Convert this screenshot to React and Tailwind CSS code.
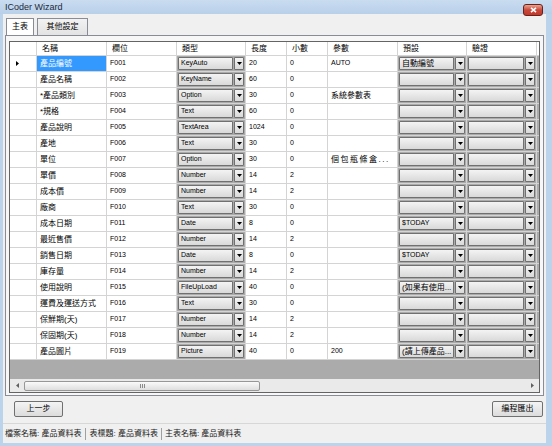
import React from 'react';

const FONT = { fontFamily: '"Liberation Sans", "Noto Sans CJK TC", sans-serif' };

const cols = [
    { key: 'name', label: '名稱', w: 'w-[70px]' },
    { key: 'field', label: '欄位', w: 'w-[70px]' },
    { key: 'type', label: '類型', w: 'w-[69px]', combo: true },
    { key: 'len', label: '長度', w: 'w-[41px]' },
    { key: 'dec', label: '小數', w: 'w-[41px]' },
    { key: 'param', label: '參數', w: 'w-[70px]' },
    { key: 'def', label: '預設', w: 'w-[69px]', combo: true },
    { key: 'valid', label: '驗證', w: 'w-[70px]', combo: true },
];

const rows = [
    ['產品編號', 'F001', 'KeyAuto', '20', '0', 'AUTO', '自動編號', ''],
    ['產品名稱', 'F002', 'KeyName', '60', '0', '', '', ''],
    ['*產品類別', 'F003', 'Option', '30', '0', '系統參數表', '', ''],
    ['*規格', 'F004', 'Text', '60', '0', '', '', ''],
    ['產品說明', 'F005', 'TextArea', '1024', '0', '', '', ''],
    ['產地', 'F006', 'Text', '30', '0', '', '', ''],
    ['單位', 'F007', 'Option', '30', '0', '個包瓶條盒...', '', ''],
    ['單價', 'F008', 'Number', '14', '2', '', '', ''],
    ['成本價', 'F009', 'Number', '14', '2', '', '', ''],
    ['廠商', 'F010', 'Text', '30', '0', '', '', ''],
    ['成本日期', 'F011', 'Date', '8', '0', '', '$TODAY', ''],
    ['最近售價', 'F012', 'Number', '14', '2', '', '', ''],
    ['銷售日期', 'F013', 'Date', '8', '0', '', '$TODAY', ''],
    ['庫存量', 'F014', 'Number', '14', '2', '', '', ''],
    ['使用說明', 'F015', 'FileUpLoad', '40', '0', '', '(如果有使用...', ''],
    ['運費及運送方式', 'F016', 'Text', '30', '0', '', '', ''],
    ['保鮮期(天)', 'F017', 'Number', '14', '2', '', '', ''],
    ['保固期(天)', 'F018', 'Number', '14', '2', '', '', ''],
    ['產品圖片', 'F019', 'Picture', '40', '0', '200', '(請上傳產品...', ''],
];

const isCjk = (s) => /[\u3400-\u9fff]/.test(s);

const Arrow = () => (
    <svg width="5" height="3" viewBox="0 0 5 3"><path d="M0 0h5L2.5 3z" fill="#000" /></svg>
);

const Combo = ({ value }) => (
    <div className="flex h-full gap-px">
        <div className="flex-1 min-w-0 flex items-center px-[2px] border border-[#707070] rounded-[1px] bg-gradient-to-b from-[#f4f4f4] to-[#d9d9d9] overflow-hidden whitespace-nowrap">
            {value}
        </div>
        <div className="w-[10px] flex items-center justify-center border border-[#707070] rounded-[1px] bg-gradient-to-b from-[#f4f4f4] to-[#d9d9d9]">
            <Arrow />
        </div>
    </div>
);

const Cell = ({ col, value, selected }) => {
    const size = isCjk(value) ? 'text-[8px]' : 'text-[7px]';
    if (col.combo) {
        return (
            <div className={`${col.w} h-full shrink-0 border-r border-[#d4d4d4] p-px ${size}`}>
                <Combo value={value} />
            </div>
        );
    }
    return (
        <div
            className={`${col.w} h-full shrink-0 border-r border-[#d4d4d4] flex items-center px-[3px] whitespace-nowrap overflow-hidden ${size} ${
                selected ? 'bg-[#3399ff] text-white' : 'bg-white text-black'
            } ${col.key === 'param' && value.startsWith('個') ? 'tracking-[1.5px]' : ''}`}
        >
            {value}
        </div>
    );
};

const Grid = () => (
    <div className="border border-[#646464] bg-[#ababab] flex flex-col">
        {/* 표 머리 */}
        <div className="flex h-[14px] bg-white border-b border-[#d4d4d4] text-[8px]">
            <div className="w-[27px] shrink-0 border-r border-[#d4d4d4]" />
            {cols.map((c) => (
                <div key={c.key} className={`${c.w} shrink-0 border-r border-[#d4d4d4] flex items-center px-[5px]`}>
                    {c.label}
                </div>
            ))}
        </div>
        {rows.map((r, i) => (
            <div key={r[1]} className="flex h-[16px] border-b border-[#d4d4d4]">
                <div className="w-[27px] shrink-0 bg-white border-r border-[#d4d4d4] flex items-center pl-[6px]">
                    {i === 0 && (
                        <svg width="3" height="5" viewBox="0 0 3 5"><path d="M0 0l3 2.5L0 5z" fill="#000" /></svg>
                    )}
                </div>
                {cols.map((c, j) => (
                    <Cell key={c.key} col={c} value={r[j]} selected={i === 0 && j === 0} />
                ))}
            </div>
        ))}
        <div className="h-[19px]" />
        {/* 가로 스크롤바 */}
        <div className="h-[13px] bg-[#eaeaea] flex items-center px-[2px] gap-[2px]">
            <div className="w-[10px] flex justify-center">
                <svg width="3" height="5" viewBox="0 0 3 5"><path d="M3 0L0 2.5 3 5z" fill="#606060" /></svg>
            </div>
            <div className="w-[236px] h-[10px] rounded-[2px] border border-[#979797] bg-gradient-to-b from-[#fafafa] to-[#dedede] flex items-center justify-center gap-px">
                <div className="w-px h-[4px] bg-[#8a8a8a]" />
                <div className="w-px h-[4px] bg-[#8a8a8a]" />
                <div className="w-px h-[4px] bg-[#8a8a8a]" />
            </div>
            <div className="flex-1" />
            <div className="w-[10px] flex justify-center">
                <svg width="3" height="5" viewBox="0 0 3 5"><path d="M0 0l3 2.5L0 5z" fill="#606060" /></svg>
            </div>
        </div>
    </div>
);

const Button = ({ children, className }) => (
    <div className={`h-[16px] flex items-center justify-center rounded-[2px] border border-[#707070] bg-gradient-to-b from-[#f4f4f4] to-[#dcdcdc] text-[8px] ${className}`}>
        {children}
    </div>
);

export default function App() {
    return (
        <div style={FONT} className="w-[552px] h-[446px] bg-[#bcd3ec] flex flex-col overflow-hidden text-black">
            {/* 타이틀 바 */}
            <div className="h-[14px] shrink-0 flex items-center justify-between pl-[5px] pr-[9px] bg-gradient-to-b from-[#c9dcf0] to-[#b9d0ea]">
                <span className="text-[9px] text-[#1b2a3c] mt-[2px]">ICoder Wizard</span>
                <div className="relative z-10 w-[20px] h-[12px] mt-[6px] rounded-[3px] border border-[#6b2018] bg-gradient-to-b from-[#e8a493] via-[#c8483a] to-[#c0392b] flex items-center justify-center">
                    <svg width="7" height="6" viewBox="0 0 7 6"><path d="M1 0.8L6 5.2M6 0.8L1 5.2" stroke="#fff" strokeWidth="1.6" /></svg>
                </div>
            </div>

            {/* 클라이언트 영역 */}
            <div className="flex-1 ml-[3px] mr-[6px] mb-[3px] bg-[#f0f0f0] flex flex-col">
                {/* 탭 */}
                <div className="h-[21px] shrink-0 flex items-end pl-[3px] gap-[3px] text-[8px]">
                    <div className="h-[17px] w-[28px] flex items-center justify-center bg-white border border-b-0 border-[#898c95]">
                        主表
                    </div>
                    <div className="h-[17px] w-[51px] flex items-center justify-center bg-gradient-to-b from-[#f2f2f2] to-[#e3e3e3] border border-b-0 border-[#898c95]">
                        其他設定
                    </div>
                </div>
                <div className="mx-[2px] h-[361px] shrink-0 border border-[#898c95] bg-[#f7f7f7] pt-[5px] px-[3px]">
                    <Grid />
                </div>

                {/* 버튼 */}
                <div className="flex justify-between pl-[11px] pr-[3px] mt-[5px]">
                    <Button className="w-[49px]">上一步</Button>
                    <Button className="w-[51px]">編程匯出</Button>
                </div>

                {/* 상태 바 */}
                <div className="mt-auto h-[20px] border-t border-[#d7d7d7] bg-[#f0f0f0] flex items-center text-[8px] text-[#222]">
                    <div className="pl-[2px] pr-[4px] border-r border-[#a0a0a0]">檔案名稱: 產品資料表</div>
                    <div className="px-[3px] border-r border-[#a0a0a0]">表標題: 產品資料表</div>
                    <div className="px-[3px]">主表名稱: 產品資料表</div>
                </div>
            </div>
        </div>
    );
}
